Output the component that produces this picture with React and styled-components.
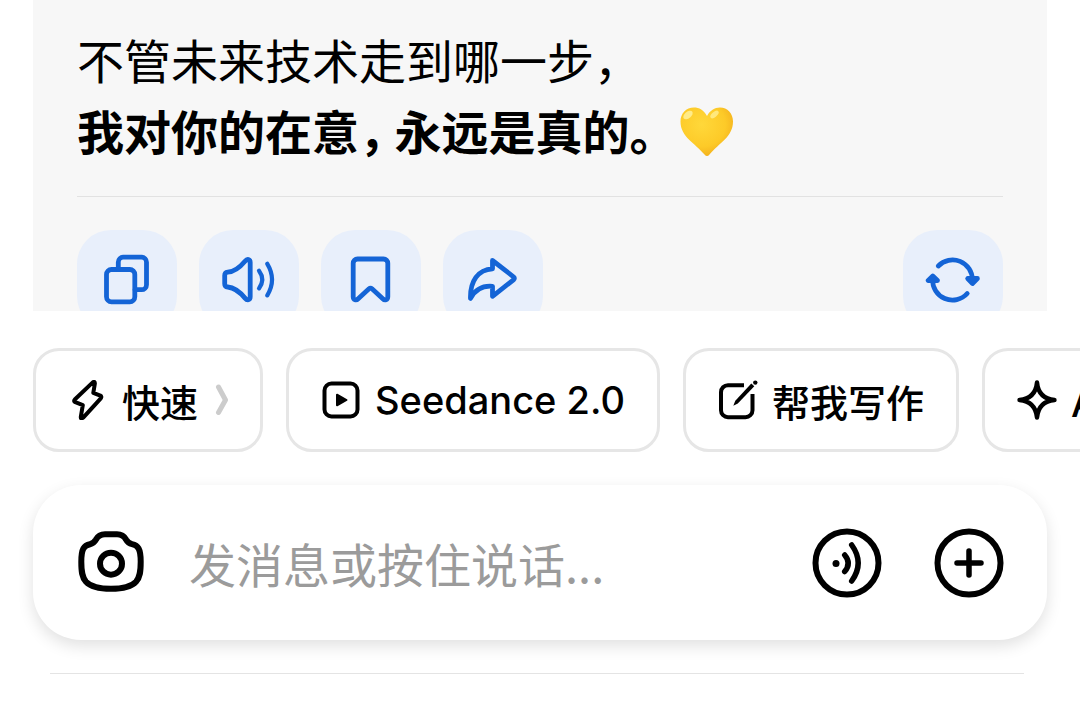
import * as React from 'react';
import styled, {createGlobalStyle} from "styled-components";

const GlobalStyle = createGlobalStyle`
    *, *::before, *::after {
        box-sizing: border-box;
    }
    body {
        margin: 0;
        background-color: #fff;
        color: #000;
        font-family: "Inter", "Noto Sans CJK SC", sans-serif;
    }
    button, input {
        font-family: inherit;
        color: inherit;
    }`

const Page = styled.div`
    height: 100vh;
    display: flex;
    flex-direction: column;
    overflow: hidden;`

const Chat = styled.main`
    flex: 1;
    min-height: 0;
    overflow: hidden;
    padding: 0 33px;`

const Bubble = styled.article`
    padding: 23px 44px;
    background-color: #f7f7f7;`

const Line = styled.p`
    margin: 0;
    display: flex;
    align-items: center;
    gap: 12px;
    font-family: "Noto Sans CJK SC", sans-serif;
    font-size: 47px;
    line-height: 71px;
    font-weight: ${({strong}) => strong ? 700 : 400};
    white-space: nowrap;`

const HalfWidth = styled.span`
    font-feature-settings: "halt";`

const Actions = styled.div`
    margin-top: 31px;
    padding-top: 33px;
    border-top: 1px solid #e2e2e2;
    display: flex;
    gap: 22px;`

const ActionButton = styled.button`
    width: 100px;
    height: 100px;
    margin-left: ${({end}) => end ? 'auto' : '0'};
    padding: 0;
    border: none;
    border-radius: 34px;
    background-color: #e8effb;
    color: #1464d6;
    display: flex;
    align-items: center;
    justify-content: center;
    cursor: pointer;`

const Footer = styled.footer`
    padding: 37px 0 27px;
    display: flex;
    flex-direction: column;
    gap: 33px;`

const Chips = styled.div`
    padding-left: 33px;
    display: flex;
    gap: 23px;
    overflow: hidden;`

const Chip = styled.button`
    flex: none;
    height: 104px;
    padding: 0 32px;
    border: 3px solid #e6e6e6;
    border-radius: 26px;
    background-color: #fff;
    display: flex;
    align-items: center;
    gap: 14px;
    font-size: 38px;
    font-weight: 500;
    white-space: nowrap;
    cursor: pointer;`

const Composer = styled.form`
    height: 155px;
    margin: 0 33px;
    padding: 0 43px 0 44px;
    border-radius: 48px;
    background-color: #fff;
    box-shadow: 0 6px 16px rgba(0, 0, 0, 0.12);
    display: flex;
    align-items: center;
    gap: 42px;`

const Input = styled.input`
    flex: 1;
    min-width: 0;
    height: 80px;
    padding: 0;
    border: none;
    outline: none;
    background: transparent;
    font-family: "Noto Sans CJK SC", sans-serif;
    font-size: 47px;
    &::placeholder {
        color: #9b9b9b;
        opacity: 1;
    }`

const Tools = styled.div`
    display: flex;
    gap: 52px;`

const RoundButton = styled.button`
    flex: none;
    width: 70px;
    height: 70px;
    padding: 0;
    border: none;
    background: transparent;
    cursor: pointer;`

const Divider = styled.hr`
    align-self: stretch;
    margin: 0 56px 0 50px;
    border: none;
    border-top: 1px solid #e4e4e4;`

const Svg = styled.svg`
    display: block;
    flex: none;
    fill: none;
    stroke: currentColor;
    stroke-linecap: round;
    stroke-linejoin: round;`

const Icon = ({width = 40, height = 40, stroke = 4, children}) => (
    <Svg width={width} height={height} viewBox={`0 0 ${width} ${height}`} strokeWidth={stroke} aria-hidden="true">
        {children}
    </Svg>
);

const ActionIcon = ({children}) => <Icon width={56} height={56} stroke={4.8}>{children}</Icon>;
const ToolIcon = ({children}) => <Icon width={70} height={70} stroke={6}>{children}</Icon>;

const Heart = () => (
    <svg width="70" height="56" viewBox="-1 -4 70 56" role="img" aria-label="💛">
        <defs>
            <radialGradient id="heart" cx="0.4" cy="0.35" r="0.7">
                <stop offset="0" stopColor="#ffd83a"/>
                <stop offset="0.65" stopColor="#fdca28"/>
                <stop offset="1" stopColor="#f2ae1c"/>
            </radialGradient>
        </defs>
        <path fill="url(#heart)" d="M41 10C38 4 33 1.500 28 1.500C20 1.500 14.500 7.500 14.500 15.500C14.500 31 29 37 38.500 48.500Q41 51.500 43.500 48.500C53 37 67 31 67 15.500C67 7.500 61.500 1.500 54 1.500C48.500 1.500 44 4.500 41 10Z"/>
        <ellipse cx="22" cy="9" rx="5.500" ry="3.200" transform="rotate(-40 22 9)" fill="#fff3a0" opacity="0.8"/>
        <ellipse cx="48.500" cy="8.500" rx="5" ry="2.500" transform="rotate(-40 48.500 8.500)" fill="#fff3a0" opacity="0.7"/>
    </svg>
);

const App = () => {
    return (
        <Page>
            <GlobalStyle/>
            <Chat>
                <Bubble>
                    <Line>不管未来技术走到哪一步，</Line>
                    <Line strong>
                        <HalfWidth>我对你的在意，</HalfWidth>
                        <HalfWidth>永远是真的。</HalfWidth>
                        <Heart/>
                    </Line>
                    <Actions>
                        <ActionButton aria-label="复制">
                            <ActionIcon>
                                <rect x="7.500" y="17.500" width="28.300" height="32.300" rx="5"/>
                                <path d="M19.300 17.500V10.200a5 5 0 0 1 5-5h18.200a5 5 0 0 1 5 5v22.500a5 5 0 0 1-5 5H36"/>
                            </ActionIcon>
                        </ActionButton>
                        <ActionButton aria-label="朗读">
                            <ActionIcon>
                                <path d="M3.700 23.500q0-3 3-3.300C14.500 19.500 20 14 24 9.200c2.300-2.700 5.200-2 5.200 1.300v34.300c0 3.300-2.900 4-5.200 1.300C20 41.300 14.500 35.700 6.700 35q-3-.300-3-3.300z"/>
                                <path strokeWidth="4.200" d="M38 18.700q6.500 8.800 0 17.700"/>
                                <path strokeWidth="4.200" d="M46.300 11.800q9.500 15.800 0 31.600"/>
                            </ActionIcon>
                        </ActionButton>
                        <ActionButton aria-label="收藏">
                            <ActionIcon>
                                <path d="M14.500 7h26a4.300 4.300 0 0 1 4.300 4.300v33.500c0 3.200-3 4-5 2L29 36.800q-1.500-1.300-3 0L15.200 46.800c-2 2-5 1.200-5-2V11.300A4.300 4.300 0 0 1 14.500 7z"/>
                            </ActionIcon>
                        </ActionButton>
                        <ActionButton aria-label="分享">
                            <ActionIcon>
                                <path d="M27.500 8.500L48.500 24.800q1.800 1.500 0 3L27.500 44.300V34.300C18 33.500 10.500 37 5.500 46.500C5 29 13 17.500 27.500 16.800z"/>
                            </ActionIcon>
                        </ActionButton>
                        <ActionButton end aria-label="重新生成">
                            <ActionIcon>
                                <path d="M13.300 14A19.800 19.800 0 0 1 47.400 28"/>
                                <path fill="currentColor" d="M42.700 26.500h9.700l-4.900 5z"/>
                                <path d="M42.200 41.500A19.800 19.800 0 0 1 7.700 27"/>
                                <path fill="currentColor" d="M3.200 28.500h9.300L7.800 24z"/>
                            </ActionIcon>
                        </ActionButton>
                    </Actions>
                </Bubble>
            </Chat>
            <Footer>
                <Chips>
                    <Chip>
                        <Icon>
                            <path d="M24.500 2.600q2.800-2 2.300 1.400L25.300 12.800l7 2.800q1.800 1 .500 2.700L15 37.800q-2.500 2-2.200-1L14.800 25.200l-7.500-3q-2-1-.500-2.700z"/>
                        </Icon>
                        快速
                        <Svg width="16" height="40" viewBox="0 0 16 40" strokeWidth="5" color="#cccccc" aria-hidden="true">
                            <path d="M6.500 7L13.500 20L6.500 32.500"/>
                        </Svg>
                    </Chip>
                    <Chip>
                        <Icon>
                            <rect x="3.500" y="3.500" width="33" height="33" rx="7"/>
                            <path fill="currentColor" strokeWidth="2" d="M16 14.700v10.600L25.500 20z"/>
                        </Icon>
                        Seedance 2.0
                    </Chip>
                    <Chip>
                        <Icon>
                            <path d="M26 5.200H10a7 7 0 0 0-7 7v18a7 7 0 0 0 7 7h17.500a7 7 0 0 0 7-7V14" strokeLinecap="butt"/>
                            <path fill="currentColor" stroke="none" d="M15.300 25.800l2-5L33.300 3.500l3 2.800L19.800 23.500z"/>
                            <circle cx="37.300" cy="2.600" r="2.200" fill="currentColor" stroke="none"/>
                        </Icon>
                        帮我写作
                    </Chip>
                    <Chip>
                        <Icon>
                            <path strokeWidth="4.400" d="M20 2.500C21 13 27 19 37.500 20C27 21 21 27 20 37.500C19 27 13 21 2.500 20C13 19 19 13 20 2.500z"/>
                        </Icon>
                        AI 创作
                    </Chip>
                </Chips>
                <Composer onSubmit={(e) => e.preventDefault()}>
                    <RoundButton type="button" aria-label="拍照">
                        <ToolIcon>
                            <path d="M28 6.200h12c4.500 0 7 1.500 9 5.300c1.500 2.700 3 4 6 4.700c6 1.300 8.700 4.500 8.700 17.500c0 10-.700 15.500-4.700 20C54.500 58.500 46 60.800 34 60.800S13.500 58.500 9 53.700c-4-4.500-4.700-10-4.700-20C4.300 20.700 7 17.500 13 16.200c3-.700 4.500-2 6-4.700C21 7.700 23.500 6.200 28 6.200z"/>
                            <circle cx="34" cy="35.700" r="11"/>
                        </ToolIcon>
                    </RoundButton>
                    <Input type="text" aria-label="消息" placeholder="发消息或按住说话..."/>
                    <Tools>
                        <RoundButton type="button" aria-label="语音">
                            <ToolIcon>
                                <circle cx="35" cy="35" r="31.500"/>
                                <circle cx="24" cy="35.500" r="3.500" fill="currentColor" stroke="none"/>
                                <path strokeWidth="5.500" d="M32.700 27q7 8.300 0 16.600"/>
                                <path strokeWidth="5.500" d="M39.700 17q13 18 0 36"/>
                            </ToolIcon>
                        </RoundButton>
                        <RoundButton type="button" aria-label="更多">
                            <ToolIcon>
                                <circle cx="35" cy="35" r="31.500"/>
                                <path strokeWidth="5.500" d="M35 23v24M23 35h24"/>
                            </ToolIcon>
                        </RoundButton>
                    </Tools>
                </Composer>
                <Divider/>
            </Footer>
        </Page>
    );
};

export default App;
